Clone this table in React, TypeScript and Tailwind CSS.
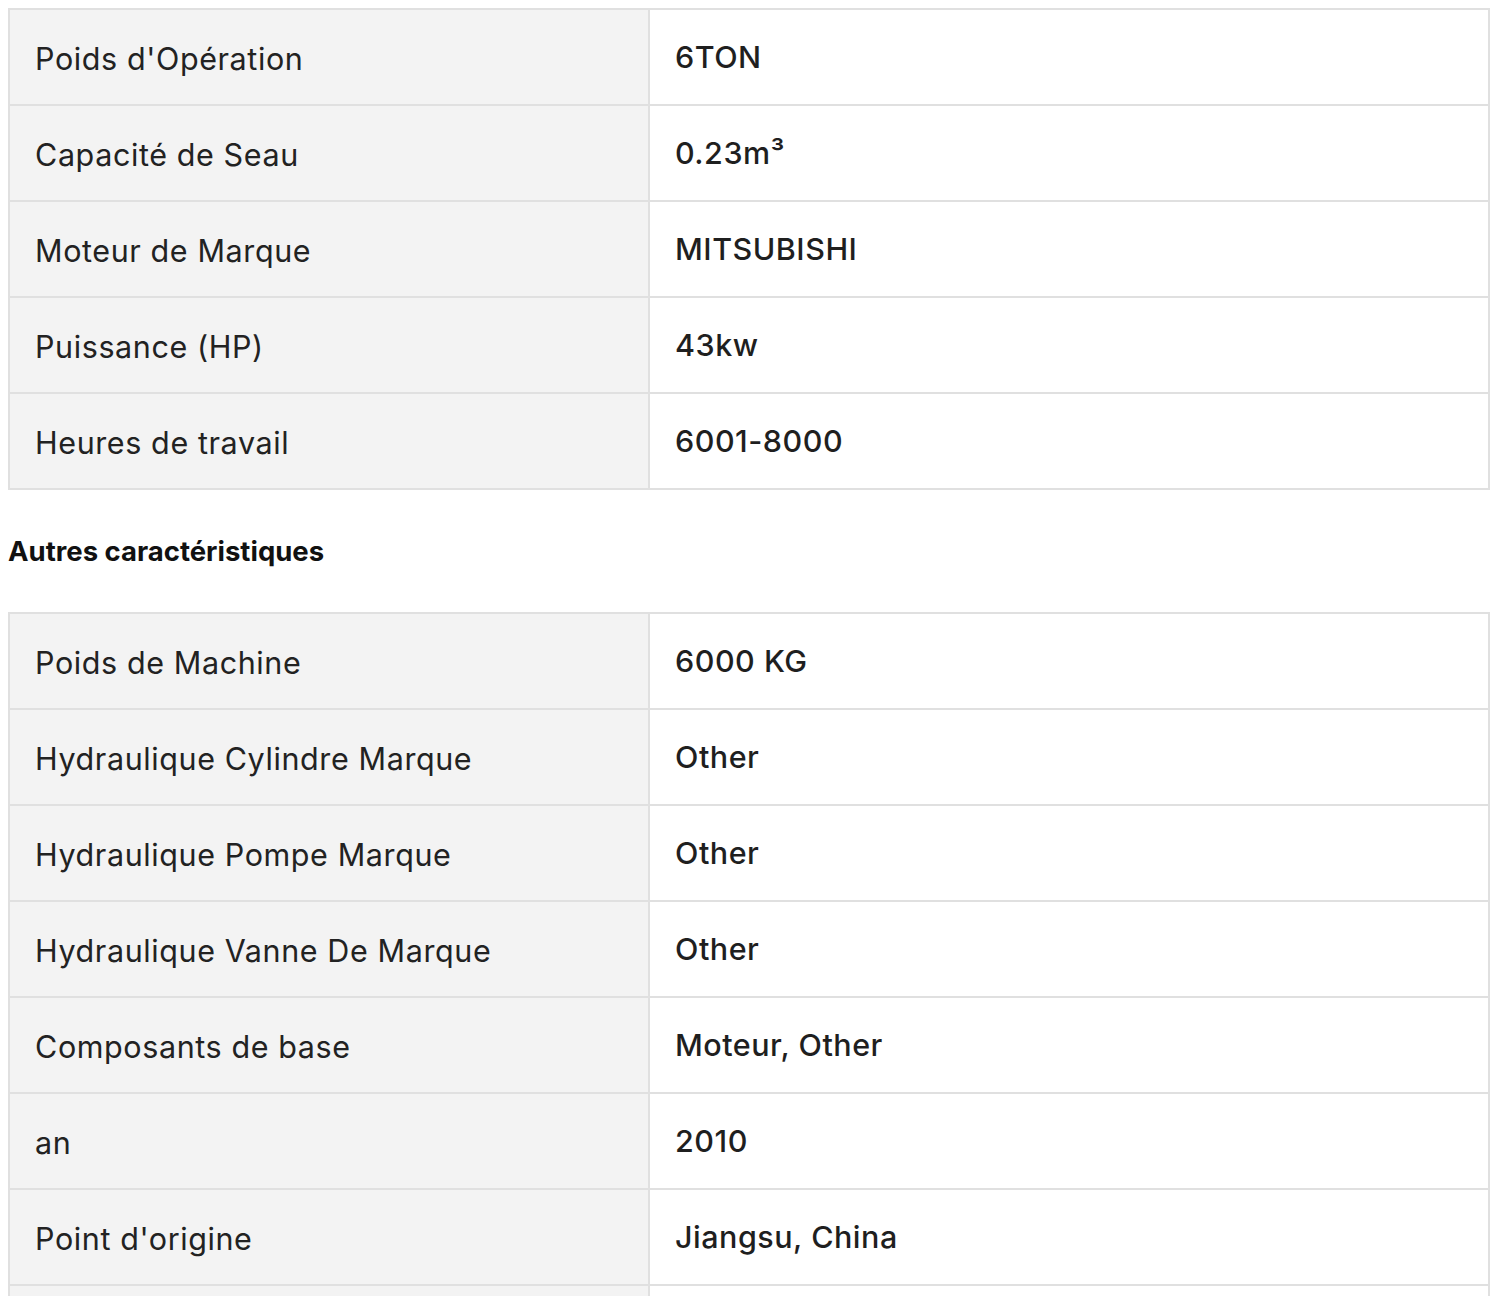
const mainSpecs: [string, string][] = [
  ["Poids d'Opération", '6TON'],
  ['Capacité de Seau', '0.23m³'],
  ['Moteur de Marque', 'MITSUBISHI'],
  ['Puissance (HP)', '43kw'],
  ['Heures de travail', '6001-8000'],
];

const otherSpecs: [string, string][] = [
  ['Poids de Machine', '6000 KG'],
  ['Hydraulique Cylindre Marque', 'Other'],
  ['Hydraulique Pompe Marque', 'Other'],
  ['Hydraulique Vanne De Marque', 'Other'],
  ['Composants de base', 'Moteur, Other'],
  ['an', '2010'],
  ["Point d'origine", 'Jiangsu, China'],
  ['Garantie', '1 An'],
];

const SpecTable = ({ rows }: { rows: [string, string][] }) => (
  <div className="w-[1482px] border-2 border-[#e0e0e0]">
    {rows.map(([label, value], i) => (
      <div
        key={label}
        className={`flex ${i < rows.length - 1 ? 'h-[96px] border-b-2 border-[#e0e0e0]' : 'h-[94px]'}`}
      >
        <div className="flex w-[640px] shrink-0 items-center border-r-2 border-[#e0e0e0] bg-[#f3f3f3] pl-[25px] pt-[4px] text-[30.5px] font-normal tracking-[0.6px] text-[#222]">
          {label}
        </div>
        <div className="flex flex-1 items-center pl-[25px] text-[30.5px] font-medium tracking-[0.5px] text-[#1f1f1f]">
          {value}
        </div>
      </div>
    ))}
  </div>
);

export default function App() {
  return (
    <div className="bg-white pl-[8px] pt-[8px] font-['Inter','Liberation_Sans',sans-serif]">
      <SpecTable rows={mainSpecs} />
      <h3 className="pb-[44px] pt-[44px] text-[27.5px] font-bold leading-[34px] text-[#111]">
        Autres caractéristiques
      </h3>
      <SpecTable rows={otherSpecs} />
    </div>
  );
}
